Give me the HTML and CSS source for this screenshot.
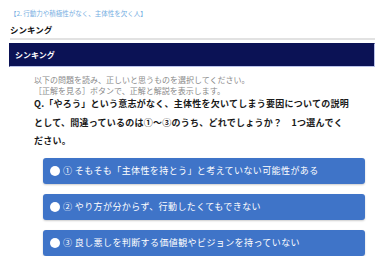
FILE: index.html
```html
<!DOCTYPE html>
<html lang="ja">
<head>
<meta charset="utf-8">
<link rel="stylesheet" href="styles.css">
</head>
<body>
<div class="page">
  <div class="crumb">【2. 行動力や積極性がなく、主体性を欠く人】</div>
  <div class="title">シンキング</div>
  <div class="rule"></div>
  <div class="bar">シンキング</div>
  <div class="content">
    <p class="intro">以下の問題を読み、正しいと思うものを選択してください。<br>［正解を見る］ボタンで、正解と解説を表示します。</p>
    <p class="question">Q.「やろう」という意志がなく、主体性を欠いてしまう要因についての説明として、間違っているのは①～③のうち、どれでしょうか？　1つ選んでください。</p>
    <div class="choices">
      <div class="choice"><span class="dot"></span><span class="label">① そもそも「主体性を持とう」と考えていない可能性がある</span></div>
      <div class="choice"><span class="dot"></span><span class="label">② やり方が分からず、行動したくてもできない</span></div>
      <div class="choice"><span class="dot"></span><span class="label">③ 良し悪しを判断する価値観やビジョンを持っていない</span></div>
    </div>
  </div>
</div>
</body>
</html>
```
FILE: styles.css
```css
html, body {
  margin: 0;
  padding: 0;
  background: #ffffff;
}
body {
  font-family: "Noto Sans CJK JP", "Noto Sans", sans-serif;
  color: #222;
}
.page {
  padding: 0 9px 0 10px;
}
.crumb {
  margin-top: 9px;
  font-size: 6.5px;
  line-height: 8px;
  color: #75aee2;
  white-space: nowrap;
}
.title {
  margin-top: 6px;
  font-size: 8.5px;
  font-weight: 700;
  line-height: 12px;
  color: #111;
}
.rule {
  margin-top: 3px;
  height: 2px;
  background: #e2e2e2;
}
.bar {
  margin-top: 3px;
  margin-left: -1px;
  height: 22px;
  line-height: 22px;
  padding-left: 5px;
  background: #0b1255;
  border: 1px solid #b9c2ea;
  border-top-color: #0b1255;
  border-left-color: #0b1255;
  color: #fff;
  font-size: 8px;
  font-weight: 700;
}
.content {
  padding-left: 24px;
}
.intro {
  margin: 7px 0 0 0;
  font-size: 8px;
  line-height: 11px;
  color: #8a8a8a;
}
.question {
  margin: -1px 0 0 0;
  width: 317px;
  font-size: 9px;
  letter-spacing: 0.25px;
  line-height: 18.5px;
  font-weight: 700;
  color: #1a1a1a;
}
.choices {
  margin: 7px 0 0 9px;
  width: 322px;
  display: flex;
  flex-direction: column;
  gap: 10px;
}
.choice {
  height: 26px;
  display: flex;
  align-items: center;
  gap: 3px;
  padding-left: 7px;
  background: #3f74c8;
  border-radius: 3px;
  box-shadow: 0 1px 2px rgba(0, 0, 0, 0.2);
  color: #fff;
}
.dot {
  width: 10px;
  height: 10px;
  border-radius: 50%;
  background: #fff;
  flex: none;
}
.label {
  font-size: 9px;
  letter-spacing: 0.4px;
  line-height: 12px;
  white-space: nowrap;
}
```
